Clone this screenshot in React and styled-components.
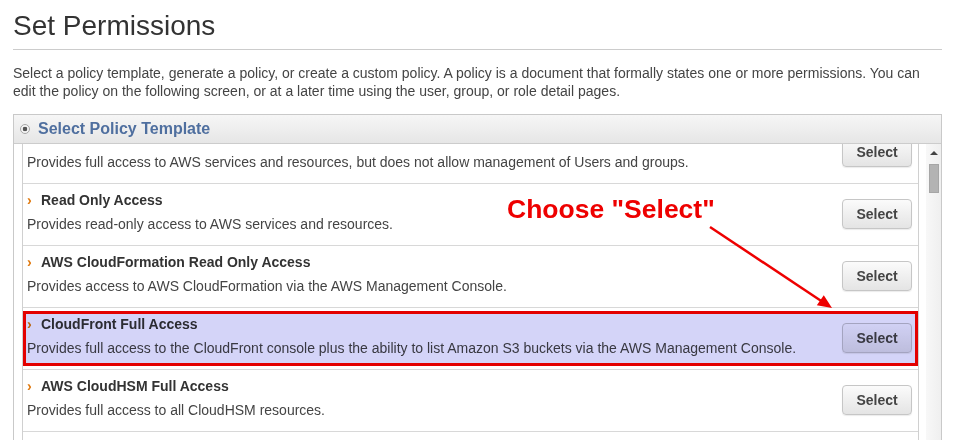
import React, { useLayoutEffect, useRef } from "react";
import styled, { createGlobalStyle } from "styled-components";

const GlobalStyle = createGlobalStyle`
  html, body {
    margin: 0;
    padding: 0;
    background: #ffffff;
    overflow: hidden;
    font-family: "Liberation Sans", Arial, sans-serif;
  }
`;

const Page = styled.div`
  position: relative;
  padding: 10px 16px 0 13px;
  width: 958px;
  height: 440px;
  box-sizing: border-box;
`;

const Title = styled.h1`
  margin: 0;
  font-size: 28px;
  line-height: 32px;
  font-weight: normal;
  color: #333333;
  padding: 0 0 7px 0;
  border-bottom: 1px solid #cccccc;
`;

const Intro = styled.p`
  margin: 14px 0 14px 0;
  font-size: 14px;
  line-height: 18px;
  color: #444444;
`;

const Panel = styled.div`
  border: 1px solid #c9c9c9;
  border-bottom: none;
`;

const PanelHeader = styled.div`
  height: 28px;
  display: flex;
  align-items: center;
  gap: 8px;
  padding-left: 6px;
  background: linear-gradient(#f6f6f6, #e6e6e6);
  border-bottom: 1px solid #cccccc;
`;

const Radio = styled.span`
  width: 10px;
  height: 10px;
  box-sizing: border-box;
  border-radius: 50%;
  border: 1px solid #a8a8a8;
  background: radial-gradient(circle, #555555 0 2px, #f4f4f4 2.6px);
`;

const HeaderTitle = styled.span`
  font-size: 16px;
  font-weight: bold;
  color: #4f6f9f;
`;

const PanelBody = styled.div`
  display: flex;
  padding-left: 8px;
  height: 310px;
`;

const ListViewport = styled.div`
  flex: 1;
  overflow: hidden;
  border-left: 1px solid #d0d0d0;
  border-right: 1px solid #d0d0d0;
`;

const Row = styled.div`
  position: relative;
  height: 61px;
  display: flex;
  align-items: flex-start;
  justify-content: space-between;
  padding: 0 6px 0 4px;
  border-bottom: 1px solid #d8d8d8;
`;

const RowText = styled.div`
  display: flex;
  flex-direction: column;
  gap: 6px;
  padding-top: 7px;
`;

const RowTitle = styled.div`
  display: flex;
  align-items: center;
  font-size: 14px;
  line-height: 18px;
  font-weight: bold;
  color: #333333;
`;

const Chevron = styled.span`
  width: 14px;
  color: #e07a10;
  font-weight: bold;
  font-size: 14px;
`;

const RowDesc = styled.div`
  font-size: 14px;
  line-height: 18px;
  color: #444444;
`;

const SelectButton = styled.button`
  align-self: center;
  margin-bottom: 2px;
  width: 70px;
  height: 30px;
  border: 1px solid #c6c6c6;
  border-radius: 4px;
  background: linear-gradient(#fbfbfb, #e4e4e4);
  box-shadow: 0 1px 1px rgba(0, 0, 0, 0.08);
  font-family: "Liberation Sans", Arial, sans-serif;
  font-size: 14px;
  font-weight: bold;
  color: #444444;
  padding: 0;
`;

const Highlight = styled.div`
  position: absolute;
  left: 0;
  right: 0;
  top: 3px;
  bottom: 3px;
  border: 3px solid #e30000;
  background: #d4d4f8;
  mix-blend-mode: multiply;
  pointer-events: none;
`;

const Scrollbar = styled.div`
  width: 15px;
  margin-left: 7px;
  background: linear-gradient(90deg, #f8f8f8, #efefef);
  display: flex;
  flex-direction: column;
  align-items: center;
  padding-top: 7px;
  gap: 9px;
`;

const ArrowUp = styled.span`
  width: 0;
  height: 0;
  border-left: 4px solid transparent;
  border-right: 4px solid transparent;
  border-bottom: 4px solid #444444;
`;

const Thumb = styled.span`
  width: 10px;
  height: 29px;
  box-sizing: border-box;
  background: #b3b3b3;
  border: 1px solid #a6a6a6;
`;

const Callout = styled.div`
  position: absolute;
  left: 507px;
  top: 194px;
  font-size: 26.5px;
  line-height: 30px;
  font-weight: bold;
  color: #ee0000;
  white-space: nowrap;
`;

const ArrowSvg = styled.svg`
  position: absolute;
  left: 0;
  top: 0;
  pointer-events: none;
`;

const rows = [
  {
    title: "Power User Access",
    desc: "Provides full access to AWS services and resources, but does not allow management of Users and groups.",
  },
  { title: "Read Only Access", desc: "Provides read-only access to AWS services and resources." },
  {
    title: "AWS CloudFormation Read Only Access",
    desc: "Provides access to AWS CloudFormation via the AWS Management Console.",
  },
  {
    title: "CloudFront Full Access",
    desc: "Provides full access to the CloudFront console plus the ability to list Amazon S3 buckets via the AWS Management Console.",
    highlighted: true,
  },
  { title: "AWS CloudHSM Full Access", desc: "Provides full access to all CloudHSM resources." },
  { title: "AWS CloudHSM Read Only Access", desc: "Provides read-only access to all CloudHSM resources." },
];

export default function App() {
  const listRef = useRef(null);
  useLayoutEffect(() => {
    if (listRef.current) listRef.current.scrollTop = 22;
  }, []);

  return (
    <Page>
      <GlobalStyle />
      <Title>Set Permissions</Title>
      <Intro>
        Select a policy template, generate a policy, or create a custom policy. A policy is a document that
        formally states one or more permissions. You can edit the policy on the following screen, or at a later
        time using the user, group, or role detail pages.
      </Intro>
      <Panel>
        <PanelHeader>
          <Radio />
          <HeaderTitle>Select Policy Template</HeaderTitle>
        </PanelHeader>
        <PanelBody>
          <ListViewport ref={listRef}>
            {rows.map((r) => (
              <Row key={r.title}>
                <RowText>
                  <RowTitle>
                    <Chevron>›</Chevron>
                    {r.title}
                  </RowTitle>
                  <RowDesc>{r.desc}</RowDesc>
                </RowText>
                <SelectButton>Select</SelectButton>
                {r.highlighted && <Highlight />}
              </Row>
            ))}
          </ListViewport>
          <Scrollbar>
            <ArrowUp />
            <Thumb />
          </Scrollbar>
        </PanelBody>
      </Panel>
      <Callout>Choose "Select"</Callout>
      <ArrowSvg width="958" height="440" viewBox="0 0 958 440">
        <line x1="710" y1="227" x2="822" y2="301.5" stroke="#ee0000" strokeWidth="2.5" />
        <polygon points="832,308 816.8,305.3 823.8,295.3" fill="#ee0000" />
      </ArrowSvg>
    </Page>
  );
}
